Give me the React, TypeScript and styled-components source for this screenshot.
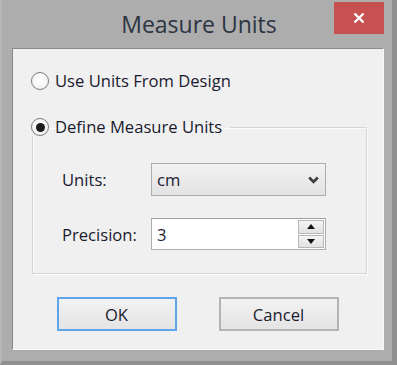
import React from "react";
import styled, { createGlobalStyle } from "styled-components";

const Global = createGlobalStyle`
  html, body { margin: 0; padding: 0; background: #8e8e8e; }
  body { font-family: "Open Sans", "Noto Sans", "DejaVu Sans", sans-serif; }
  * { box-sizing: border-box; }
`;

const Frame = styled.div`
  width: 397px;
  height: 365px;
  background: #adadad;
  border-left: 2px solid #b6b6b6;
  border-right: 5px solid #909090;
  border-bottom: 4px solid #909090;
  display: flex;
  flex-direction: column;
`;

const TitleBar = styled.div`
  height: 48px;
  display: grid;
  grid-template-columns: 1fr auto 1fr;
  align-items: start;
`;

const Title = styled.div`
  grid-column: 2;
  margin-top: 8px;
  margin-left: 4px;
  font-size: 23px;
  line-height: 32px;
  color: #2c3442;
`;

const CloseButton = styled.div`
  grid-column: 3;
  justify-self: end;
  margin-top: 2px;
  margin-right: 8px;
  width: 50px;
  height: 32px;
  background: #c75050;
  display: flex;
  align-items: center;
  justify-content: center;
`;

const Panel = styled.div`
  flex: 1;
  margin: 0 8px 11px 10px;
  background: #f0f0f0;
  border-top: 1px solid #8a8a8a;
  border-left: 1px solid #8a8a8a;
  border-right: 1px solid #f8f8f8;
  border-bottom: 1px solid #f8f8f8;
  padding: 23px 16px 0 18px;
  display: flex;
  flex-direction: column;
`;

const RadioLabel = styled.label`
  display: flex;
  align-items: center;
  gap: 6px;
  font-size: 16.6px;
  line-height: 18px;
  color: #1a1a2e;
  white-space: nowrap;
`;

const RadioCircle = styled.span<{ $checked?: boolean }>`
  width: 18px;
  height: 18px;
  border-radius: 50%;
  border: 1px solid #7a7a7a;
  background: radial-gradient(circle at 50% 40%, #ffffff 0%, #f4f4f4 70%, #e4e4e4 100%);
  display: flex;
  align-items: center;
  justify-content: center;
  flex: none;
  &::after {
    content: "";
    display: ${(p) => (p.$checked ? "block" : "none")};
    width: 9px;
    height: 9px;
    border-radius: 50%;
    background: #1c1c1c;
  }
`;

const Group = styled.fieldset`
  margin: 28px 0 0 1px;
  padding: 27px 0 23px 29px;
  border: 1px solid #d6d6d6;
  box-shadow: inset 1px 1px 0 #fbfbfb, 1px 1px 0 #fbfbfb;
  min-width: 0;
`;

const Legend = styled.legend`
  padding: 0 8px 0 0;
  margin-left: -31px;
`;

const FormGrid = styled.div`
  display: grid;
  grid-template-columns: 89px 175px;
  row-gap: 22px;
  align-items: center;
`;

const FieldLabel = styled.span`
  font-size: 16.6px;
  color: #1a1a2e;
`;

const Select = styled.div`
  height: 33px;
  border: 1px solid #acacac;
  background: linear-gradient(#f2f2f2, #e3e3e3);
  display: flex;
  align-items: center;
  justify-content: space-between;
  padding: 0 6px 0 5px;
  font-size: 16.6px;
  color: #1a1a2e;
`;

const Spin = styled.div`
  height: 32px;
  border: 1px solid #abadb3;
  border-top-color: #a0a0a0;
  background: #ffffff;
  display: flex;
  align-items: center;
  padding: 0 1px 0 5px;
  font-size: 16.6px;
  color: #1a1a2e;
`;

const SpinValue = styled.span`
  flex: 1;
`;

const SpinButtons = styled.div`
  width: 26px;
  height: 28px;
  display: flex;
  flex-direction: column;
  gap: 1px;
`;

const SpinButton = styled.div`
  flex: 1;
  border: 1px solid #b8b8b8;
  background: linear-gradient(#f4f4f4, #e2e2e2);
  display: flex;
  align-items: center;
  justify-content: center;
`;

const ButtonRow = styled.div`
  margin-top: 23px;
  display: flex;
  justify-content: center;
  gap: 42px;
  padding-right: 3px;
`;

const Button = styled.div<{ $default?: boolean }>`
  width: 120px;
  height: 34px;
  border: ${(p) => (p.$default ? "2px solid #5fa3ea" : "2px solid #b4b4b4")};
  background: linear-gradient(#f2f2f2, #e4e4e4);
  display: flex;
  align-items: center;
  justify-content: center;
  font-size: 16.6px;
  color: #1a1a2e;
`;

export default function App() {
  return (
    <>
      <Global />
      <Frame>
        <TitleBar>
          <Title>Measure Units</Title>
          <CloseButton>
            <svg width="12" height="12" viewBox="0 0 12 12">
              <path d="M1.5 1.5 L10.5 10.5 M10.5 1.5 L1.5 10.5" stroke="#fff" strokeWidth="2.4" />
            </svg>
          </CloseButton>
        </TitleBar>
        <Panel>
          <RadioLabel>
            <RadioCircle />
            Use Units From Design
          </RadioLabel>
          <Group>
            <Legend>
              <RadioLabel>
                <RadioCircle $checked />
                Define Measure Units
              </RadioLabel>
            </Legend>
            <FormGrid>
              <FieldLabel>Units:</FieldLabel>
              <Select>
                <span>cm</span>
                <svg width="11" height="8" viewBox="0 0 11 8">
                  <path d="M1.2 1.5 L5.5 5.8 L9.8 1.5" stroke="#3c3c3c" strokeWidth="2.6" fill="none" />
                </svg>
              </Select>
              <FieldLabel>Precision:</FieldLabel>
              <Spin>
                <SpinValue>3</SpinValue>
                <SpinButtons>
                  <SpinButton>
                    <svg width="8" height="5" viewBox="0 0 8 5">
                      <path d="M0 5 L4 0 L8 5 Z" fill="#111" />
                    </svg>
                  </SpinButton>
                  <SpinButton>
                    <svg width="8" height="5" viewBox="0 0 8 5">
                      <path d="M0 0 L8 0 L4 5 Z" fill="#111" />
                    </svg>
                  </SpinButton>
                </SpinButtons>
              </Spin>
            </FormGrid>
          </Group>
          <ButtonRow>
            <Button $default>OK</Button>
            <Button>Cancel</Button>
          </ButtonRow>
        </Panel>
      </Frame>
    </>
  );
}
